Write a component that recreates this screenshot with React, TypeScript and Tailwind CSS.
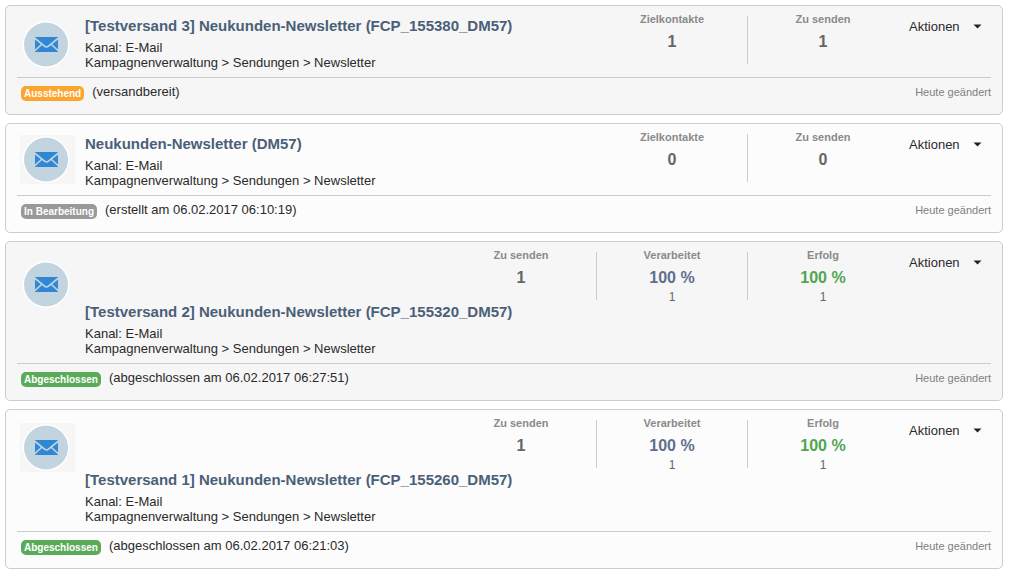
import React from "react";

type Stat = { label: string; value: string; valueClass: string; count?: string };

type Mailing = {
  title: string;
  shaded: boolean;
  iconPad: string;
  stats: Stat[];
  status: string;
  statusClass: string;
  note: string;
};

const GRAY = "text-[#666]";
const BLUE = "text-[#5f6f8f]";
const GREEN = "text-[#4fa650]";

const finishedStats: Stat[] = [
  { label: "Zu senden", value: "1", valueClass: GRAY },
  { label: "Verarbeitet", value: "100 %", valueClass: BLUE, count: "1" },
  { label: "Erfolg", value: "100 %", valueClass: GREEN, count: "1" },
];

const mailings: Mailing[] = [
  {
    title: "[Testversand 3] Neukunden-Newsletter (FCP_155380_DM57)",
    shaded: true,
    iconPad: "pt-[14px]",
    stats: [
      { label: "Zielkontakte", value: "1", valueClass: GRAY },
      { label: "Zu senden", value: "1", valueClass: GRAY },
    ],
    status: "Ausstehend",
    statusClass: "bg-[#fba52f]",
    note: "(versandbereit)",
  },
  {
    title: "Neukunden-Newsletter (DM57)",
    shaded: false,
    iconPad: "pt-[11px]",
    stats: [
      { label: "Zielkontakte", value: "0", valueClass: GRAY },
      { label: "Zu senden", value: "0", valueClass: GRAY },
    ],
    status: "In Bearbeitung",
    statusClass: "bg-[#999]",
    note: "(erstellt am 06.02.2017 06:10:19)",
  },
  {
    title: "[Testversand 2] Neukunden-Newsletter (FCP_155320_DM57)",
    shaded: true,
    iconPad: "pt-[18px]",
    stats: finishedStats,
    status: "Abgeschlossen",
    statusClass: "bg-[#5aab59]",
    note: "(abgeschlossen am 06.02.2017 06:27:51)",
  },
  {
    title: "[Testversand 1] Neukunden-Newsletter (FCP_155260_DM57)",
    shaded: false,
    iconPad: "pt-[13px]",
    stats: finishedStats,
    status: "Abgeschlossen",
    statusClass: "bg-[#5aab59]",
    note: "(abgeschlossen am 06.02.2017 06:21:03)",
  },
];

function MailIcon() {
  return (
    <svg width="55" height="49" viewBox="0 0 55 49" className="block bg-[#f6f6f6]" aria-hidden="true">
      <circle cx="26" cy="24.5" r="23.5" fill="#fff" />
      <circle cx="26" cy="24.5" r="22" fill="#c2d4e0" />
      <rect x="15" y="17" width="23" height="15" fill="#2f87d6" />
      <path
        d="M14.5 18 L24.5 26.2 Q26.5 27.8 28.5 26.2 L38.5 18 M14.5 31 L21.5 24.5 M38.5 31 L31.5 24.5"
        fill="none"
        stroke="#c2d4e0"
        strokeWidth="1.7"
      />
    </svg>
  );
}

function StatColumn({ stat, last }: { stat: Stat; last: boolean }) {
  return (
    <div
      className={`h-12 w-[151px] border-r text-center ${last ? "border-transparent" : "border-[#ccc]"}`}
    >
      <div className="text-[11px] leading-[6px] font-bold text-[#8a8a8a]">{stat.label}</div>
      <div className={`mt-2.5 text-[16px] leading-[20px] font-bold ${stat.valueClass}`}>{stat.value}</div>
      {stat.count && <div className="mt-0.5 text-[12px] leading-[14px] text-[#666]">{stat.count}</div>}
    </div>
  );
}

function MailingCard({ mailing }: { mailing: Mailing }) {
  return (
    <article
      className={`rounded-[5px] border border-[#ccc] px-[11px] ${mailing.shaded ? "bg-[#f6f6f6]" : "bg-[#fcfcfc]"}`}
    >
      <div className="flex border-b border-[#ccc]">
        <div className={`w-[68px] shrink-0 pl-[3px] ${mailing.iconPad}`}>
          <MailIcon />
        </div>
        <div className="flow-root min-w-0 flex-1 pt-[10px] pb-[7px]">
          <div className="float-right flex h-[50px]">
            {mailing.stats.map((stat, i) => (
              <StatColumn key={stat.label} stat={stat} last={i === mailing.stats.length - 1} />
            ))}
            <button
              type="button"
              className="ml-[10px] flex h-[21px] w-[82px] items-center gap-[13px] text-[13px]"
            >
              Aktionen
              <svg width="9" height="5" viewBox="0 0 9 5" aria-hidden="true">
                <path d="M0.5 0.5h8L4.5 4.5z" fill="#222" />
              </svg>
            </button>
          </div>
          <div className="flow-root w-max">
            <h2 className="text-[15px] leading-[20px] font-bold text-[#4a6078]">{mailing.title}</h2>
            <p className="mt-1 leading-[15px]">Kanal: E-Mail</p>
            <p className="leading-[15px]">Kampagnenverwaltung &gt; Sendungen &gt; Newsletter</p>
          </div>
        </div>
      </div>
      <div className="flex h-9 items-start pt-[5px] pl-1 leading-[18px]">
        <span
          className={`mt-[3px] rounded-[5px] px-[3px] text-[10px] leading-[15px] font-bold text-white ${mailing.statusClass}`}
        >
          {mailing.status}
        </span>
        <span className="ml-2">{mailing.note}</span>
        <span className="ml-auto text-[11px] text-[#808080]">Heute geändert</span>
      </div>
    </article>
  );
}

export default function App() {
  return (
    <main className="flex flex-col gap-2 bg-white pt-[5px] pr-[6px] pl-[5px] font-['Liberation_Sans',Arial,sans-serif] text-[13px] text-[#2a2a2a]">
      {mailings.map((m) => (
        <MailingCard key={m.title} mailing={m} />
      ))}
    </main>
  );
}
